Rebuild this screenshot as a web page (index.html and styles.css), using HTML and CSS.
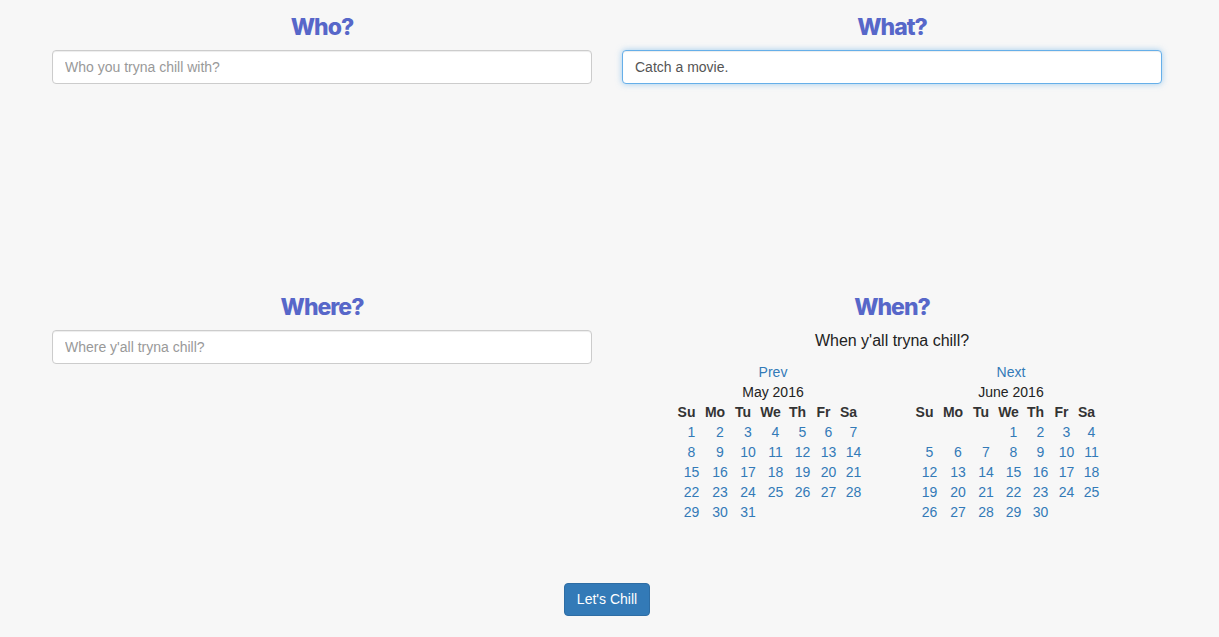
FILE: index.html
```html
<!DOCTYPE html>
<html lang="en">
<head>
<meta charset="utf-8">
<title>Let's Chill</title>
<link rel="stylesheet" href="styles.css">
</head>
<body>
<div class="page">
  <div class="grid">
    <section class="cell">
      <h2 class="title">Who?</h2>
      <input class="field" type="text" placeholder="Who you tryna chill with?">
    </section>
    <section class="cell">
      <h2 class="title">What?</h2>
      <input class="field field-focus" type="text" value="Catch a movie.">
    </section>
    <section class="cell">
      <h2 class="title">Where?</h2>
      <input class="field" type="text" placeholder="Where y'all tryna chill?">
    </section>
    <section class="cell">
      <h2 class="title">When?</h2>
      <p class="prompt">When y'all tryna chill?</p>
      <div class="months">
        <div class="month">
          <a class="nav" href="#">Prev</a>
          <div class="month-name">May 2016</div>
          <table class="cal">
            <colgroup><col class="c1"><col class="c2"><col class="c3"><col class="c4"><col class="c5"><col class="c6"><col class="c7"></colgroup>
            <thead><tr><th>Su</th><th>Mo</th><th>Tu</th><th>We</th><th>Th</th><th>Fr</th><th>Sa</th></tr></thead>
            <tbody>
              <tr><td><a href="#">1</a></td><td><a href="#">2</a></td><td><a href="#">3</a></td><td><a href="#">4</a></td><td><a href="#">5</a></td><td><a href="#">6</a></td><td><a href="#">7</a></td></tr>
              <tr><td><a href="#">8</a></td><td><a href="#">9</a></td><td><a href="#">10</a></td><td><a href="#">11</a></td><td><a href="#">12</a></td><td><a href="#">13</a></td><td><a href="#">14</a></td></tr>
              <tr><td><a href="#">15</a></td><td><a href="#">16</a></td><td><a href="#">17</a></td><td><a href="#">18</a></td><td><a href="#">19</a></td><td><a href="#">20</a></td><td><a href="#">21</a></td></tr>
              <tr><td><a href="#">22</a></td><td><a href="#">23</a></td><td><a href="#">24</a></td><td><a href="#">25</a></td><td><a href="#">26</a></td><td><a href="#">27</a></td><td><a href="#">28</a></td></tr>
              <tr><td><a href="#">29</a></td><td><a href="#">30</a></td><td><a href="#">31</a></td><td></td><td></td><td></td><td></td></tr>
            </tbody>
          </table>
        </div>
        <div class="month">
          <a class="nav" href="#">Next</a>
          <div class="month-name">June 2016</div>
          <table class="cal">
            <colgroup><col class="c1"><col class="c2"><col class="c3"><col class="c4"><col class="c5"><col class="c6"><col class="c7"></colgroup>
            <thead><tr><th>Su</th><th>Mo</th><th>Tu</th><th>We</th><th>Th</th><th>Fr</th><th>Sa</th></tr></thead>
            <tbody>
              <tr><td></td><td></td><td></td><td><a href="#">1</a></td><td><a href="#">2</a></td><td><a href="#">3</a></td><td><a href="#">4</a></td></tr>
              <tr><td><a href="#">5</a></td><td><a href="#">6</a></td><td><a href="#">7</a></td><td><a href="#">8</a></td><td><a href="#">9</a></td><td><a href="#">10</a></td><td><a href="#">11</a></td></tr>
              <tr><td><a href="#">12</a></td><td><a href="#">13</a></td><td><a href="#">14</a></td><td><a href="#">15</a></td><td><a href="#">16</a></td><td><a href="#">17</a></td><td><a href="#">18</a></td></tr>
              <tr><td><a href="#">19</a></td><td><a href="#">20</a></td><td><a href="#">21</a></td><td><a href="#">22</a></td><td><a href="#">23</a></td><td><a href="#">24</a></td><td><a href="#">25</a></td></tr>
              <tr><td><a href="#">26</a></td><td><a href="#">27</a></td><td><a href="#">28</a></td><td><a href="#">29</a></td><td><a href="#">30</a></td><td></td><td></td></tr>
            </tbody>
          </table>
        </div>
      </div>
    </section>
  </div>
  <div class="actions">
    <button class="btn" type="button">Let's Chill</button>
  </div>
</div>
</body>
</html>
```

FILE: styles.css
```css
html, body {
  margin: 0;
  padding: 0;
  background: #f7f7f7;
}

body {
  font-family: "Liberation Sans", Arial, Helvetica, sans-serif;
  font-size: 14px;
  line-height: 20px;
  color: #333333;
}

.page {
  width: 1140px;
  margin-left: 37px;
}

.grid {
  display: grid;
  grid-template-columns: 570px 570px;
  grid-auto-rows: minmax(280px, auto);
}

.cell {
  padding: 0 15px;
  display: flex;
  flex-direction: column;
  align-items: center;
}

.title {
  margin: 13px 0 9px;
  font-family: Inter, "Noto Sans", sans-serif;
  font-weight: 800;
  font-size: 23px;
  line-height: 28px;
  letter-spacing: -1px;
  color: #5767c9;
}

.field {
  box-sizing: border-box;
  width: 540px;
  height: 34px;
  padding: 6px 12px;
  font-family: "Liberation Sans", Arial, sans-serif;
  font-size: 14px;
  line-height: 20px;
  color: #555555;
  background: #ffffff;
  border: 1px solid #cccccc;
  border-radius: 4px;
  box-shadow: inset 0 1px 1px rgba(0, 0, 0, 0.075);
  outline: none;
}

.field::placeholder {
  color: #999999;
}

.field-focus {
  border-color: #66afe9;
  box-shadow: inset 0 1px 1px rgba(0, 0, 0, 0.075), 0 0 6px rgba(102, 175, 233, 0.6);
}

.prompt {
  margin: 0 0 10px;
  font-size: 16px;
  line-height: 22px;
  color: #222222;
}

.months {
  display: flex;
  gap: 36px;
}

.month {
  width: 202px;
  display: flex;
  flex-direction: column;
  align-items: center;
}

.nav {
  color: #337ab7;
  text-decoration: none;
  line-height: 20px;
}

.month-name {
  line-height: 20px;
  color: #222222;
}

.cal {
  width: 189px;
  margin-right: 13px;
  table-layout: fixed;
  border-collapse: collapse;
  border-spacing: 0;
}

.cal .c1 { width: 29px; }
.cal .c2 { width: 28px; }
.cal .c3 { width: 28px; }
.cal .c4 { width: 27px; }
.cal .c5 { width: 27px; }
.cal .c6 { width: 25px; }
.cal .c7 { width: 25px; }

.cal th,
.cal td {
  padding: 0;
  height: 20px;
  line-height: 20px;
  text-align: center;
  white-space: nowrap;
}

.cal th {
  font-weight: bold;
  color: #333333;
}

.cal td {
  padding-left: 9px;
  padding-right: 0;
}

.cal td a {
  color: #337ab7;
  text-decoration: none;
  margin-left: -9px;
  display: inline-block;
  transform: translateX(5px);
}

.actions {
  display: flex;
  justify-content: center;
  padding-top: 23px;
}

.btn {
  height: 33px;
  padding: 6px 12px;
  font-family: "Liberation Sans", Arial, sans-serif;
  font-size: 14px;
  line-height: 19px;
  color: #ffffff;
  background: #337ab7;
  border: 1px solid #2e6da4;
  border-radius: 4px;
  cursor: pointer;
}
```
